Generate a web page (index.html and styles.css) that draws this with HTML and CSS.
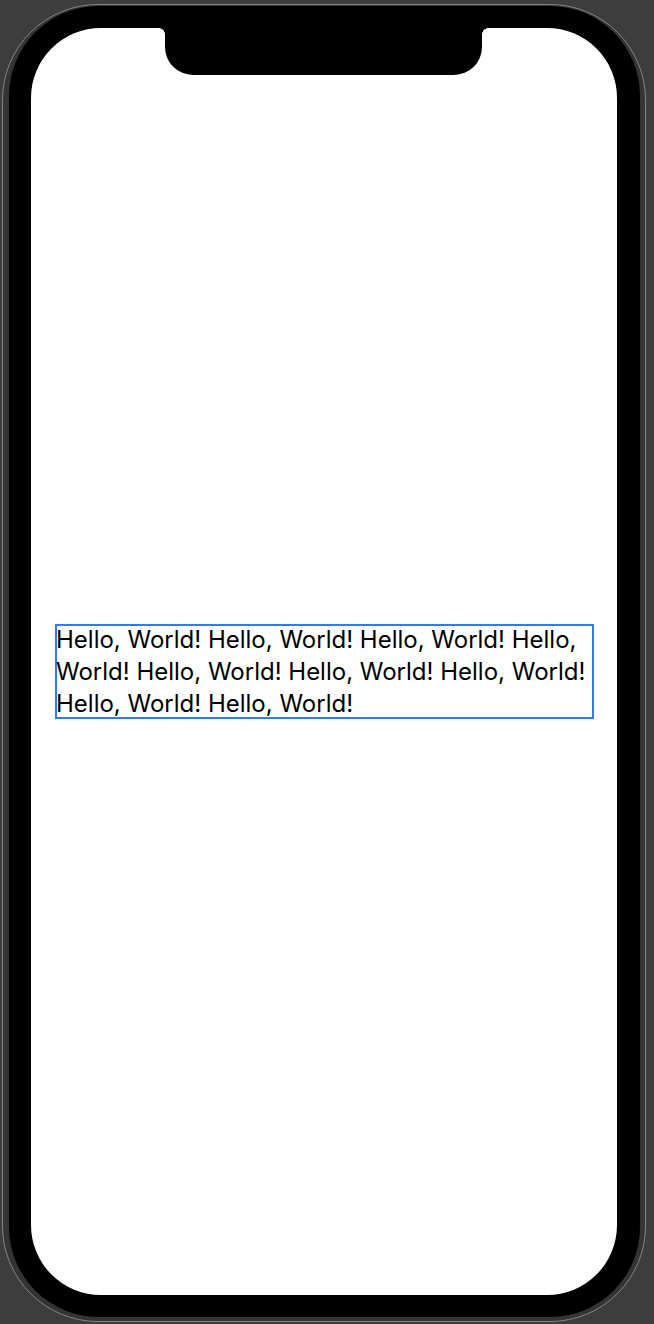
FILE: index.html
```html
<!DOCTYPE html>
<html>
<head>
<meta charset="utf-8">
<link rel="stylesheet" href="styles.css">
</head>
<body>
<div class="phone">
  <div class="bezel">
    <div class="screen">
      <div class="notch"></div>
      <div class="box">
        <p class="label">Hello, World! Hello, World! Hello, World! Hello, World! Hello, World! Hello, World! Hello, World! Hello, World! Hello, World!</p>
      </div>
    </div>
  </div>
</div>
</body>
</html>
```
FILE: styles.css
```css
html, body {
  margin: 0;
  padding: 0;
}
body {
  width: 654px;
  height: 1324px;
  overflow: hidden;
  background: #3d3d3d;
}
.phone {
  box-sizing: border-box;
  margin: 4px 0 0 2px;
  width: 644px;
  height: 1318px;
  border: 1px solid #858585;
  border-radius: 96px;
  background: #343434;
  padding: 1px 5px 4px 6px;
  display: flex;
}
.bezel {
  flex: 1;
  background: #000;
  border-radius: 90px;
  padding: 22px 23px 22px 22px;
  display: flex;
}
.screen {
  flex: 1;
  position: relative;
  background: #fff;
  border-radius: 70px;
  display: flex;
  flex-direction: column;
  justify-content: center;
  padding: 19px 23px 0 24px;
}
.notch {
  position: absolute;
  top: 0;
  left: 134px;
  width: 317px;
  height: 47px;
  background: #000;
  border-radius: 0 0 28px 28px;
}
.notch::before,
.notch::after {
  content: "";
  position: absolute;
  top: 0;
  width: 6px;
  height: 6px;
}
.notch::before {
  left: -6px;
  background: radial-gradient(circle at 0 100%, transparent 5.5px, #000 6px);
}
.notch::after {
  right: -6px;
  background: radial-gradient(circle at 100% 100%, transparent 5.5px, #000 6px);
}
.box {
  box-sizing: border-box;
  height: 95px;
  border: 2px solid #3478f6;
}
.label {
  margin: -2px 0 0 -1px;
  font-family: Inter, "Liberation Sans", sans-serif;
  font-size: 24px;
  line-height: 32px;
  color: #000;
}
```
